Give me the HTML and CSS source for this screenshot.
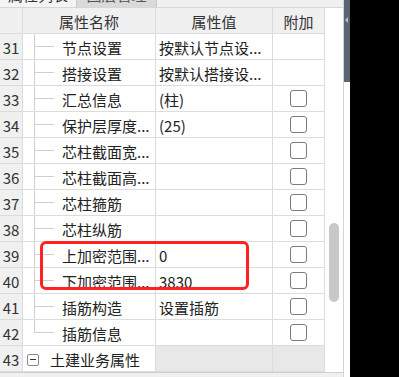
FILE: index.html
```html
<!DOCTYPE html>
<html lang="zh-CN">
<head>
    <meta charset="UTF-8">
    <title>属性列表</title>
    <link rel="stylesheet" href="styles.css">
</head>
<body>
    <div class="screen">
        <div class="panel">
            <div class="tabs">
                <div class="tab active"><span>属性列表</span></div>
                <div class="tab"><span>图层管理</span></div>
            </div>
            <div class="body">
                <div class="grid">
                    <div class="row head">
                        <div class="cell num"></div>
                        <div class="cell center">属性名称</div>
                        <div class="cell center">属性值</div>
                        <div class="cell center">附加</div>
                    </div>
                    <div class="row">
                        <div class="cell num">31</div>
                        <div class="cell name tree">节点设置</div>
                        <div class="cell value">按默认节点设...</div>
                        <div class="cell attach"></div>
                    </div>
                    <div class="row">
                        <div class="cell num">32</div>
                        <div class="cell name tree">搭接设置</div>
                        <div class="cell value">按默认搭接设...</div>
                        <div class="cell attach"></div>
                    </div>
                    <div class="row">
                        <div class="cell num">33</div>
                        <div class="cell name tree">汇总信息</div>
                        <div class="cell value">(柱)</div>
                        <div class="cell attach"><span class="check"></span></div>
                    </div>
                    <div class="row">
                        <div class="cell num">34</div>
                        <div class="cell name tree">保护层厚度...</div>
                        <div class="cell value">(25)</div>
                        <div class="cell attach"><span class="check"></span></div>
                    </div>
                    <div class="row">
                        <div class="cell num">35</div>
                        <div class="cell name tree">芯柱截面宽...</div>
                        <div class="cell value"></div>
                        <div class="cell attach"><span class="check"></span></div>
                    </div>
                    <div class="row">
                        <div class="cell num">36</div>
                        <div class="cell name tree">芯柱截面高...</div>
                        <div class="cell value"></div>
                        <div class="cell attach"><span class="check"></span></div>
                    </div>
                    <div class="row">
                        <div class="cell num">37</div>
                        <div class="cell name tree">芯柱箍筋</div>
                        <div class="cell value"></div>
                        <div class="cell attach"><span class="check"></span></div>
                    </div>
                    <div class="row">
                        <div class="cell num">38</div>
                        <div class="cell name tree">芯柱纵筋</div>
                        <div class="cell value"></div>
                        <div class="cell attach"><span class="check"></span></div>
                    </div>
                    <div class="row">
                        <div class="cell num">39</div>
                        <div class="cell name tree">上加密范围...</div>
                        <div class="cell value">0</div>
                        <div class="cell attach"><span class="check"></span></div>
                    </div>
                    <div class="row">
                        <div class="cell num">40</div>
                        <div class="cell name tree">下加密范围...</div>
                        <div class="cell value">3830</div>
                        <div class="cell attach"><span class="check"></span></div>
                    </div>
                    <div class="row">
                        <div class="cell num">41</div>
                        <div class="cell name tree">插筋构造</div>
                        <div class="cell value">设置插筋</div>
                        <div class="cell attach"><span class="check"></span></div>
                    </div>
                    <div class="row">
                        <div class="cell num">42</div>
                        <div class="cell name tree last">插筋信息</div>
                        <div class="cell value"></div>
                        <div class="cell attach"><span class="check"></span></div>
                    </div>
                    <div class="row">
                        <div class="cell num">43</div>
                        <div class="cell group"><span class="toggle"></span>土建业务属性</div>
                        <div class="cell value shaded"></div>
                        <div class="cell attach shaded"></div>
                    </div>
                    <div class="mark"></div>
                </div>
                <div class="track"><div class="thumb"></div></div>
            </div>
            <div class="foot"></div>
        </div>
        <div class="splitter"><span class="arrow"></span></div>
    </div>
</body>
</html>
```

FILE: styles.css
```css
body {
    margin: 0;
    background-color: #000;
    font-family: "Noto Sans CJK SC", "Liberation Sans", sans-serif;
    font-size: 15px;
    color: #222;
}
.screen {
    display: flex;
    height: 377px;
}
.panel {
    width: 344px;
    box-sizing: border-box;
    border-right: 1px solid #d4d4d4;
    background-color: #fff;
    display: flex;
    flex-direction: column;
}
.tabs {
    height: 8px;
    display: flex;
    overflow: hidden;
    background-color: #f0f0f0;
    border-bottom: 1px solid #d6d6d6;
}
.tab {
    width: 80px;
    box-sizing: border-box;
    border-right: 1px solid #c8c8c8;
    background-color: #dadada;
    color: #555;
    overflow: hidden;
}
.tab.active {
    width: 77px;
    background-color: #f4f4f4;
    color: #333;
}
.tab span {
    display: block;
    line-height: 15px;
    margin-top: -13px;
    text-align: center;
}
.body {
    display: flex;
    flex: 1;
}
.grid {
    width: 325px;
    position: relative;
}
.row {
    display: grid;
    grid-template-columns: 23px 133px 117px 52px;
    height: 26px;
}
.cell {
    box-sizing: border-box;
    border-right: 1px solid #dcdcdc;
    border-bottom: 1px solid #dcdcdc;
    padding-top: 2px;
    line-height: 23px;
    white-space: nowrap;
    overflow: hidden;
}
.head .cell {
    background-color: #f0f0f0;
    color: #333;
}
.center {
    text-align: center;
}
.num {
    background-color: #f0f0f0;
    text-align: center;
    color: #333;
}
.name {
    padding-left: 39px;
}
.tree {
    background-image: linear-gradient(#cfcfcf, #cfcfcf), linear-gradient(#cfcfcf, #cfcfcf);
    background-position: 11px 0, 11px 12px;
    background-size: 1px 100%, 20px 1px;
    background-repeat: no-repeat;
}
.tree.last {
    background-size: 1px 13px, 20px 1px;
}
.value {
    padding-left: 3px;
}
.shaded {
    background-color: #e8e8e8;
}
.attach {
    padding-top: 0;
    display: flex;
    align-items: center;
    justify-content: center;
}
.check {
    width: 17px;
    height: 17px;
    box-sizing: border-box;
    border: 1.5px solid #7c7c7c;
    border-radius: 3px;
    background-color: #fff;
}
.group {
    display: flex;
    align-items: center;
    padding-left: 4px;
}
.toggle {
    width: 12px;
    height: 12px;
    box-sizing: border-box;
    border: 1px solid #8a8a8a;
    border-radius: 2px;
    margin-right: 11px;
    display: flex;
    align-items: center;
    justify-content: center;
}
.toggle::before {
    content: "";
    width: 6px;
    height: 1px;
    background-color: #333;
}
.mark {
    position: absolute;
    left: 40px;
    top: 233px;
    width: 209px;
    height: 49px;
    box-sizing: border-box;
    border: 3px solid #ff2222;
    border-radius: 6px;
}
.track {
    flex: 1;
    padding-left: 4px;
}
.thumb {
    width: 10px;
    height: 79px;
    margin-top: 215px;
    border-radius: 5px;
    background-color: #c8c8c8;
}
.foot {
    height: 4px;
    background-color: #f0f0f0;
    border-top: 1px solid #d0d0d0;
}
.splitter {
    width: 6px;
    height: 377px;
    background: linear-gradient(#5b6570, #5b6570) 0 0 / 100% 82px no-repeat, #fff;
}
.arrow {
    display: block;
    width: 0;
    height: 0;
    margin-top: 17px;
    margin-left: 1px;
    border-right: 3px solid #b8c0c8;
    border-top: 3px solid transparent;
    border-bottom: 3px solid transparent;
}
```
